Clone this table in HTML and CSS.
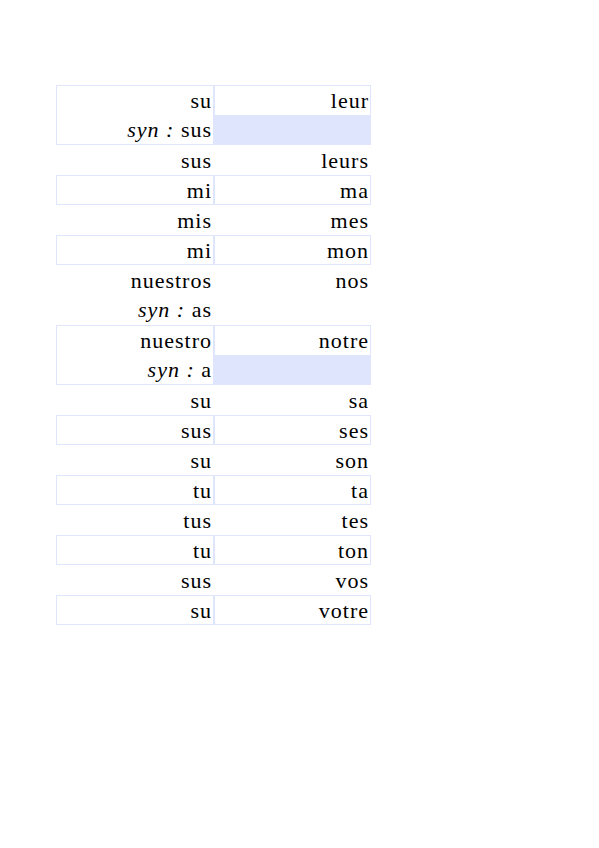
FILE: index.html
```html
<!DOCTYPE html>
<html>
<head>
<meta charset="utf-8">
<link rel="stylesheet" href="styles.css">
</head>
<body>
<table class="pairs">
  <tr class="boxed two"><td><div class="ln">su</div><div class="ln"><i>syn :</i> sus</div></td><td><div class="ln">leur</div><div class="ln fill"></div></td></tr>
  <tr><td><div class="ln">sus</div></td><td><div class="ln">leurs</div></td></tr>
  <tr class="boxed"><td><div class="ln">mi</div></td><td><div class="ln">ma</div></td></tr>
  <tr><td><div class="ln">mis</div></td><td><div class="ln">mes</div></td></tr>
  <tr class="boxed"><td><div class="ln">mi</div></td><td><div class="ln">mon</div></td></tr>
  <tr class="two"><td><div class="ln">nuestros</div><div class="ln"><i>syn :</i> as</div></td><td><div class="ln">nos</div><div class="ln"></div></td></tr>
  <tr class="boxed two"><td><div class="ln">nuestro</div><div class="ln"><i>syn :</i> a</div></td><td><div class="ln">notre</div><div class="ln fill"></div></td></tr>
  <tr><td><div class="ln">su</div></td><td><div class="ln">sa</div></td></tr>
  <tr class="boxed"><td><div class="ln">sus</div></td><td><div class="ln">ses</div></td></tr>
  <tr><td><div class="ln">su</div></td><td><div class="ln">son</div></td></tr>
  <tr class="boxed"><td><div class="ln">tu</div></td><td><div class="ln">ta</div></td></tr>
  <tr><td><div class="ln">tus</div></td><td><div class="ln">tes</div></td></tr>
  <tr class="boxed"><td><div class="ln">tu</div></td><td><div class="ln">ton</div></td></tr>
  <tr><td><div class="ln">sus</div></td><td><div class="ln">vos</div></td></tr>
  <tr class="boxed"><td><div class="ln">su</div></td><td><div class="ln">votre</div></td></tr>
</table>
</body>
</html>
```
FILE: styles.css
```css
html, body {
  margin: 0;
  padding: 0;
  background: #ffffff;
}
body {
  font-family: "Liberation Serif", serif;
  font-size: 22px;
  color: #000000;
}
.pairs {
  border-collapse: separate;
  border-spacing: 0;
  margin: 85px 0 0 56px;
}
.pairs td {
  box-sizing: border-box;
  padding: 0;
  vertical-align: top;
  text-align: right;
  border: 1px solid transparent;
}
.pairs td:first-child {
  width: 158px;
}
.pairs td:last-child {
  width: 157px;
}
.pairs .boxed td {
  border-color: #dfe5fc;
}
.ln {
  height: 28px;
  line-height: 28px;
  padding: 1px 1px 0 0;
  box-sizing: border-box;
  letter-spacing: 1px;
  white-space: nowrap;
}
.two .ln {
  height: 29px;
}
.fill {
  background: #dfe5fd;
}
.pairs i {
  font-style: italic;
}
```
